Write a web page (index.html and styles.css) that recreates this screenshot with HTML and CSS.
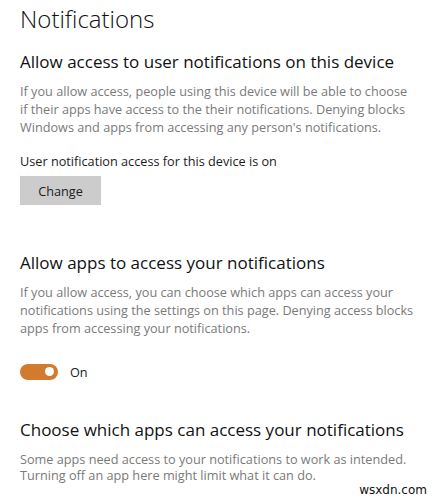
FILE: index.html
```html
<!DOCTYPE html>
<html lang="en">
<head>
<meta charset="utf-8">
<title>Notifications</title>
<link rel="stylesheet" href="styles.css">
</head>
<body>
<main class="page">
  <h1 class="title">Notifications</h1>

  <section class="group g1">
    <h2 class="heading">Allow access to user notifications on this device</h2>
    <p class="desc">If you allow access, people using this device will be able to choose if their apps have access to the their notifications. Denying blocks Windows and apps from accessing any person's notifications.</p>
    <p class="status">User notification access for this device is on</p>
    <button class="btn" type="button">Change</button>
  </section>

  <section class="group g2">
    <h2 class="heading">Allow apps to access your notifications</h2>
    <p class="desc">If you allow access, you can choose which apps can access your notifications using the settings on this page. Denying access blocks apps from accessing your notifications.</p>
    <div class="toggle-row">
      <span class="toggle"><span class="knob"></span></span>
      <span class="toggle-label">On</span>
    </div>
  </section>

  <section class="group g3">
    <h2 class="heading">Choose which apps can access your notifications</h2>
    <p class="desc tight">Some apps need access to your notifications to work as intended. Turning off an app here might limit what it can do.</p>
  </section>
</main>
<div class="watermark">wsxdn.com</div>
</body>
</html>
```

FILE: styles.css
```css
html, body {
  margin: 0;
  padding: 0;
  background: #ffffff;
}
body {
  font-family: "Open Sans", "Noto Sans", sans-serif;
  color: #000;
  width: 439px;
  height: 500px;
  overflow: hidden;
  position: relative;
}
.page {
  padding: 2px 20px 0 20px;
}
.title {
  margin: 0;
  font-weight: 300;
  font-size: 24px;
  line-height: 34px;
  color: #111;
}
.group { margin: 0; }
.g1 { margin-top: 14px; }
.g2 { margin-top: 46px; }
.g3 { margin-top: 37px; }
.heading {
  margin: 0;
  font-weight: 400;
  font-size: 17px;
  line-height: 24px;
  color: #111;
}
.desc {
  margin: 9px 0 0 0;
  font-size: 12.7px;
  line-height: 17.8px;
  color: #7a7a7a;
  width: fit-content;
  max-width: 396px;
}
.desc.tight { line-height: 16px; }
.status {
  margin: 16px 0 0 0;
  font-size: 12.7px;
  line-height: 18px;
  color: #1c1c1c;
}
.btn {
  display: block;
  margin-top: 6px;
  width: 81px;
  height: 29px;
  border: 0;
  padding: 0;
  background: #cccccc;
  font-family: inherit;
  font-size: 12.7px;
  color: #1c1c1c;
}
.toggle-row {
  margin-top: 25px;
  display: flex;
  align-items: center;
  gap: 12px;
}
.toggle {
  width: 38px;
  height: 16px;
  border-radius: 8px;
  background: #d27a2e;
  display: flex;
  align-items: center;
  justify-content: flex-end;
  padding-right: 4px;
  box-sizing: border-box;
}
.knob {
  width: 9px;
  height: 9px;
  border-radius: 50%;
  background: #fff;
}
.toggle-label {
  font-size: 12.7px;
  color: #1c1c1c;
}
.watermark {
  position: absolute;
  right: 10px;
  bottom: 2px;
  font-family: "DejaVu Sans", sans-serif;
  font-size: 12px;
  line-height: 16px;
  padding: 0 2px;
  color: #111;
  background: rgba(255,255,255,0.8);
}
```
